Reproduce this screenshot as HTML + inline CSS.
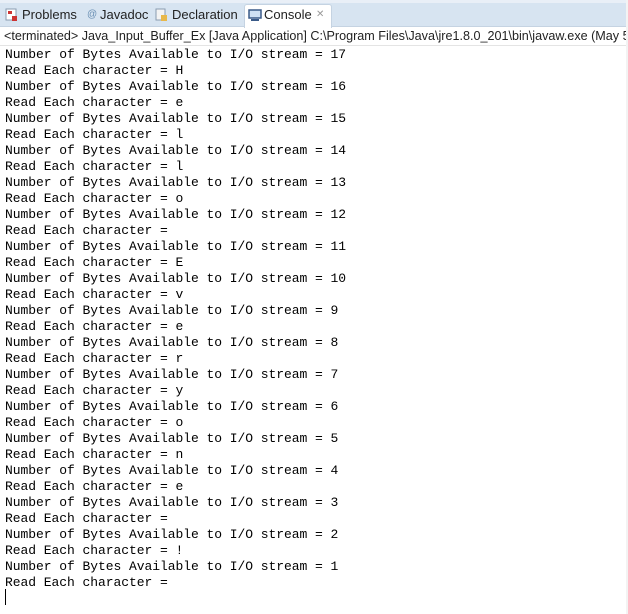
<!DOCTYPE html>
<html><head><style>
body{margin:0;width:628px;height:614px;background:#fff;position:relative;overflow:hidden}
.bar{position:absolute;left:0;top:0;width:626px;height:27px;background:#d7e4f1;border-top:3px solid #e9eff7;box-sizing:border-box;border-bottom:1px solid #c5d3e2}
.tab{position:absolute;top:7px;font:13px "Liberation Sans",sans-serif;color:#222}
.ct{position:absolute;left:244px;top:4px;width:88px;height:24px;background:#fff;border:1px solid #c5d3e2;border-bottom:none;border-radius:3px 3px 0 0;box-sizing:border-box}
.hdr{position:absolute;left:4px;top:29px;font:12.6px "Liberation Sans",sans-serif;color:#222;white-space:nowrap}
.sep{position:absolute;left:0;top:45px;width:626px;height:1px;background:#e4e4e4}
pre{position:absolute;left:5px;top:47px;margin:0;font:13px/16px "Liberation Mono",monospace;letter-spacing:-0.05px;color:#000}
.cur{position:absolute;left:5px;top:589px;width:1px;height:16px;background:#000}
.rb{position:absolute;right:0;top:0;width:2px;height:614px;background:#f3f3f3}
</style></head><body>
<div class="bar"></div>
<div class="ct"></div>
<svg style="position:absolute;left:5px;top:8px" width="14" height="14"><rect x="1" y="1" width="10" height="11" fill="#fff" stroke="#8a9bb0"/><rect x="3" y="3" width="4" height="3" fill="#c33"/><rect x="7" y="8" width="5" height="5" fill="#c33"/></svg>
<div class="tab" style="left:22px">Problems</div>
<div class="tab" style="left:87px;font-size:10px;top:9px;color:#6a8fb3">@</div>
<div class="tab" style="left:100px">Javadoc</div>
<svg style="position:absolute;left:154px;top:8px" width="14" height="14"><rect x="2" y="1" width="9" height="11" fill="#f3f3f3" stroke="#8a9bb0"/><rect x="7" y="7" width="6" height="6" fill="#e8b84a"/></svg>
<div class="tab" style="left:172px">Declaration</div>
<svg style="position:absolute;left:248px;top:9px" width="14" height="13"><rect x="1" y="1" width="12" height="8" fill="#cfe0f3" stroke="#3a5a88" stroke-width="1.5"/><rect x="3" y="10" width="8" height="2" fill="#3a5a88"/></svg>
<div class="tab" style="left:264px">Console</div>
<div class="tab" style="left:316px;font-size:10px;top:9px;color:#999">✕</div>
<div class="hdr">&lt;terminated&gt; Java_Input_Buffer_Ex [Java Application] C:\Program Files\Java\jre1.8.0_201\bin\javaw.exe (May 5</div>
<div class="sep"></div>
<pre>Number of Bytes Available to I/O stream = 17
Read Each character = H
Number of Bytes Available to I/O stream = 16
Read Each character = e
Number of Bytes Available to I/O stream = 15
Read Each character = l
Number of Bytes Available to I/O stream = 14
Read Each character = l
Number of Bytes Available to I/O stream = 13
Read Each character = o
Number of Bytes Available to I/O stream = 12
Read Each character =  
Number of Bytes Available to I/O stream = 11
Read Each character = E
Number of Bytes Available to I/O stream = 10
Read Each character = v
Number of Bytes Available to I/O stream = 9
Read Each character = e
Number of Bytes Available to I/O stream = 8
Read Each character = r
Number of Bytes Available to I/O stream = 7
Read Each character = y
Number of Bytes Available to I/O stream = 6
Read Each character = o
Number of Bytes Available to I/O stream = 5
Read Each character = n
Number of Bytes Available to I/O stream = 4
Read Each character = e
Number of Bytes Available to I/O stream = 3
Read Each character =  
Number of Bytes Available to I/O stream = 2
Read Each character = !
Number of Bytes Available to I/O stream = 1
Read Each character = </pre>
<div class="cur"></div>
<div class="rb"></div>
</body></html>
